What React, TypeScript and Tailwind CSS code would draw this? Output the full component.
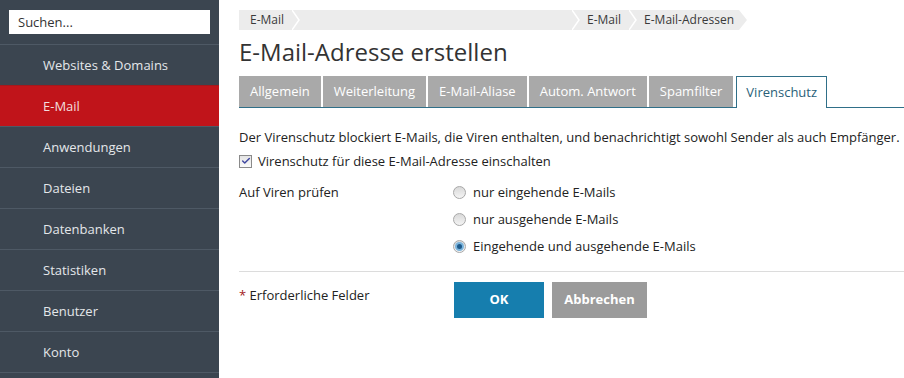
import { Check } from "lucide-react";

const menu = [
  "Websites & Domains",
  "E-Mail",
  "Anwendungen",
  "Dateien",
  "Datenbanken",
  "Statistiken",
  "Benutzer",
  "Konto",
];

const tabs = [
  "Allgemein",
  "Weiterleitung",
  "E-Mail-Aliase",
  "Autom. Antwort",
  "Spamfilter",
  "Virenschutz",
];

const radios = [
  { label: "nur eingehende E-Mails", checked: false },
  { label: "nur ausgehende E-Mails", checked: false },
  { label: "Eingehende und ausgehende E-Mails", checked: true },
];

const Chevron = () => (
  <svg width="8" height="20" viewBox="0 0 8 20" className="shrink-0 bg-[#ececec]">
    <polyline points="0,0 7,10 0,20" fill="none" stroke="#ffffff" strokeWidth="1.5" />
  </svg>
);

const Sidebar = () => (
  <aside className="w-[219px] shrink-0 bg-[#3b4550]">
    <div className="px-[9px] py-[10px]">
      <div className="h-6 bg-white pl-[9px] text-[13px] leading-6 text-[#333]">
        Suchen...
      </div>
    </div>
    {menu.map((item) => (
      <div
        key={item}
        className={
          item === "E-Mail"
            ? "h-[41px] border-t border-[#a3181c] bg-[#c0141a] pl-[43px] text-[13px] leading-[40px] text-[#f3dede]"
            : "h-[41px] border-t border-[#4e5965] pl-[43px] text-[13px] leading-[40px] text-[#e4e7ea]"
        }
      >
        {item}
      </div>
    ))}
    <div className="border-t border-[#4e5965]" />
  </aside>
);

const Breadcrumb = () => (
  <div className="flex h-5 items-center text-xs leading-5 text-[#3a3a3a]">
    <div className="w-[53px] bg-[#ececec] pl-[11px]">E-Mail</div>
    <Chevron />
    <div className="h-5 w-[272px] bg-[#ececec]" />
    <Chevron />
    <div className="bg-[#ececec] pl-[7px] pr-[8px]">E-Mail</div>
    <Chevron />
    <div className="bg-[#ececec] pl-[7px] pr-[5px]">E-Mail-Adressen</div>
    <svg width="8" height="20" viewBox="0 0 8 20" className="shrink-0">
      <polygon points="0,0 8,10 0,20" fill="#ececec" />
    </svg>
  </div>
);

const Radio = ({ checked }: { checked: boolean }) => (
  <span className="flex h-[13px] w-[13px] items-center justify-center rounded-full border border-[#a8a8a8] bg-gradient-to-b from-[#d9d9d9] to-[#f4f4f4]">
    {checked && (
      <span className="flex h-[9px] w-[9px] items-center justify-center rounded-full bg-[#7bb4dc]">
        <span className="h-[5px] w-[5px] rounded-full bg-[#1e5a8a]" />
      </span>
    )}
  </span>
);

export default function App() {
  return (
    <div
      className="flex h-[378px] w-[904px] overflow-hidden bg-white"
      style={{ fontFamily: '"Open Sans", "Noto Sans", sans-serif' }}
    >
      <Sidebar />
      <main className="flex-1 pl-5 pt-[10px]">
        <Breadcrumb />
        <h1 className="mt-[6px] text-[24px] leading-[32px] text-[#333]">
          E-Mail-Adresse erstellen
        </h1>
        <div className="mt-[8px] flex h-[32px] items-end gap-[2px] border-b border-[#2f6f88]">
          {tabs.map((tab) =>
            tab === "Virenschutz" ? (
              <div
                key={tab}
                className="-mb-px ml-[1px] h-[32px] border border-b-0 border-[#2f6f88] bg-white px-[9px] text-[13px] leading-[30px] text-[#2a5f78]"
              >
                {tab}
              </div>
            ) : (
              <div
                key={tab}
                className="h-[31px] bg-[#a9a9a9] px-[11px] text-[13px] leading-[31px] text-white"
              >
                {tab}
              </div>
            )
          )}
        </div>
        <p className="mt-[20px] text-[13px] leading-[18px] text-[#222]">
          Der Virenschutz blockiert E-Mails, die Viren enthalten, und benachrichtigt sowohl Sender als auch Empfänger.
        </p>
        <label className="mt-[6px] flex items-center gap-[6px] text-[13px] leading-[18px] text-[#222]">
          <span className="flex h-[13px] w-[13px] items-center justify-center border border-[#8a8a8a] bg-gradient-to-b from-[#e4e4e4] to-[#fafafa]">
            <Check size={10} strokeWidth={3.5} className="text-[#4048a0]" />
          </span>
          Virenschutz für diese E-Mail-Adresse einschalten
        </label>
        <div className="mt-[13px] flex text-[13px] leading-[18px] text-[#222]">
          <div className="w-[214px]">Auf Viren prüfen</div>
          <div className="flex flex-col gap-[9px]">
            {radios.map((r) => (
              <div key={r.label} className="flex items-center gap-[7px]">
                <Radio checked={r.checked} />
                {r.label}
              </div>
            ))}
          </div>
        </div>
        <div className="mt-[16px] border-t border-[#dcdcdc]" />
        <div className="mt-[10px] flex">
          <div className="w-[215px] pt-[4px] text-[13px] leading-[18px] text-[#222]">
            <span className="text-[#a31c1c]">*</span> Erforderliche Felder
          </div>
          <button className="h-9 w-[90px] bg-[#167eae] text-[13px] font-bold text-white">
            OK
          </button>
          <button className="ml-2 h-9 w-[95px] bg-[#9b9b9b] text-[13px] font-bold text-white">
            Abbrechen
          </button>
        </div>
      </main>
    </div>
  );
}
